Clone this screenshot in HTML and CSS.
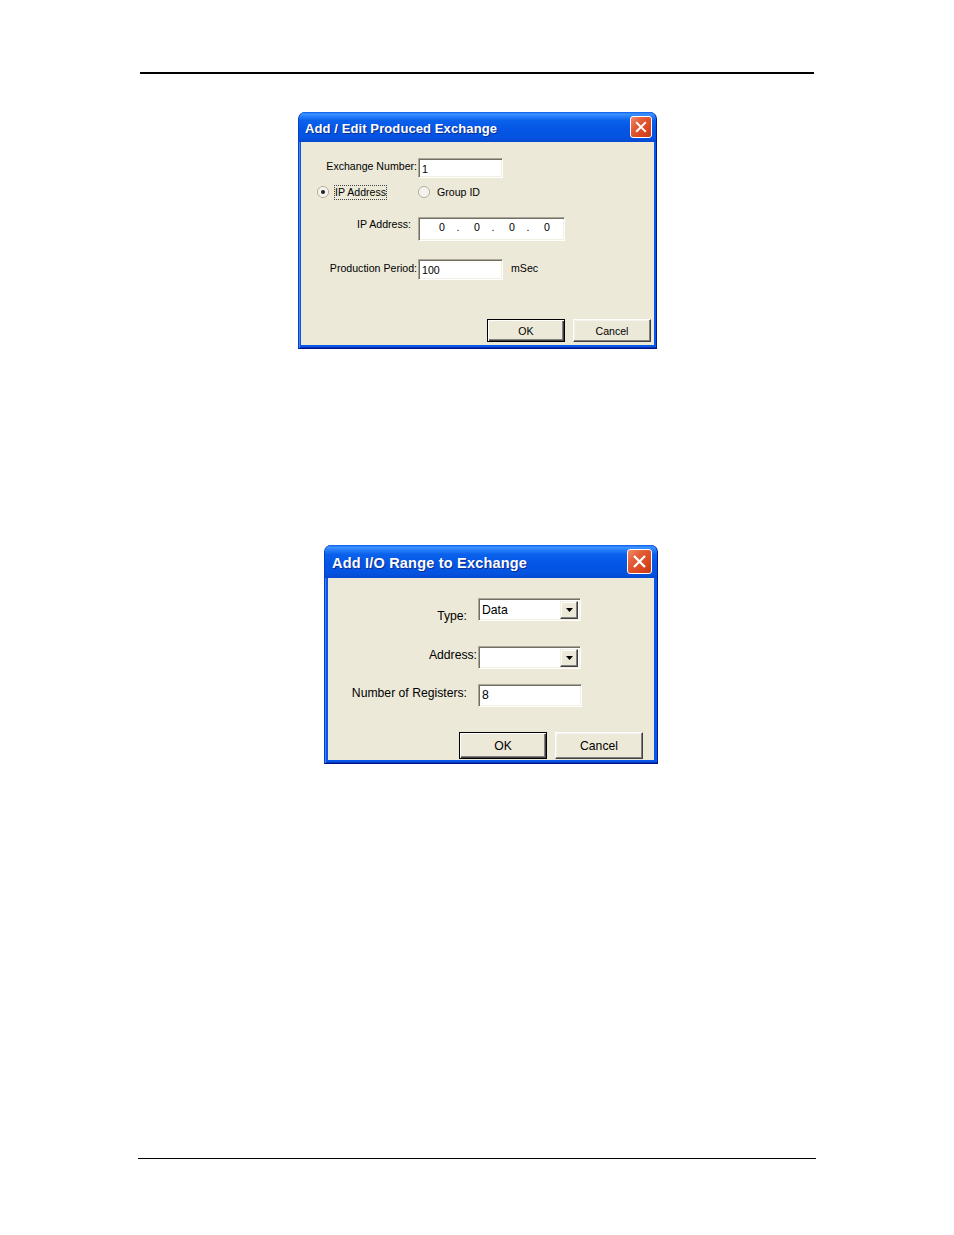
FILE: index.html
```html
<!DOCTYPE html>
<html>
<head>
<meta charset="utf-8">
<link rel="stylesheet" href="styles.css">
</head>
<body>
<div class="rule-top"></div>

<div class="win win1">
  <div class="title">
    <span class="title-text">Add / Edit Produced Exchange</span>
    <span class="close"><svg viewBox="0 0 22 22" width="100%" height="100%"><path d="M6.5 6.5 L15.5 15.5 M15.5 6.5 L6.5 15.5" stroke="#fff" stroke-width="2.2" stroke-linecap="square"/></svg></span>
  </div>
  <div class="body body1">
    <div class="row r1">
      <span class="lab lab1 up">Exchange Number:</span>
      <span class="field f1">1</span>
    </div>
    <div class="row radios">
      <span class="radio rad-a"><svg width="12" height="12" viewBox="0 0 12 12"><circle cx="6" cy="6" r="5.5" fill="#fff" stroke="#aca899"/><circle cx="6" cy="6" r="4.5" fill="#f4f3ee"/><circle cx="6" cy="6" r="2" fill="#222"/></svg><span class="focus">IP Address</span></span>
      <span class="radio rad-b"><svg width="12" height="12" viewBox="0 0 12 12"><circle cx="6" cy="6" r="5.5" fill="#fff" stroke="#aca899"/><circle cx="6" cy="6" r="4.5" fill="#f4f3ee"/></svg><span class="rtxt">Group ID</span></span>
    </div>
    <div class="row r3">
      <span class="lab lab3">IP Address:</span>
      <span class="field ip"><span class="oct">0</span><span class="dot">.</span><span class="oct">0</span><span class="dot">.</span><span class="oct">0</span><span class="dot">.</span><span class="oct">0</span></span>
    </div>
    <div class="row r4">
      <span class="lab lab1 up">Production Period:</span>
      <span class="field f1 f4">100</span>
      <span class="unit up">mSec</span>
    </div>
    <div class="btns btns1">
      <span class="btn def b1">OK</span>
      <span class="btn b1">Cancel</span>
    </div>
  </div>
</div>

<div class="win win2">
  <div class="title title2">
    <span class="title-text t2">Add I/O Range to Exchange</span>
    <span class="close close2"><svg viewBox="0 0 22 22" width="100%" height="100%"><path d="M6.5 6.5 L15.5 15.5 M15.5 6.5 L6.5 15.5" stroke="#fff" stroke-width="2.2" stroke-linecap="square"/></svg></span>
  </div>
  <div class="body body2">
    <div class="row2 q1">
      <span class="lab2 pad11 low">Type:</span>
      <span class="combo"><span class="ctext">Data</span><span class="cbtn"><svg width="7" height="4" viewBox="0 0 7 4"><path d="M0 0 H7 L3.5 4 Z" fill="#000"/></svg></span></span>
    </div>
    <div class="row2 q2">
      <span class="lab2 pad1 high">Address:</span>
      <span class="combo"><span class="ctext"></span><span class="cbtn"><svg width="7" height="4" viewBox="0 0 7 4"><path d="M0 0 H7 L3.5 4 Z" fill="#000"/></svg></span></span>
    </div>
    <div class="row2 q3">
      <span class="lab2 pad11 high">Number of Registers:</span>
      <span class="field f2">8</span>
    </div>
    <div class="btns btns2">
      <span class="btn def b2">OK</span>
      <span class="btn b2">Cancel</span>
    </div>
  </div>
</div>

<div class="rule-bottom"></div>
</body>
</html>
```

FILE: styles.css
```css
html, body {
  margin: 0;
  padding: 0;
  background: #fff;
}
body {
  width: 954px;
  height: 1235px;
  font-family: "Liberation Sans", Arial, sans-serif;
  color: #000;
}
.rule-top {
  margin: 72px 0 0 140px;
  width: 674px;
  height: 2px;
  background: #000;
}
.rule-bottom {
  margin: 394px 0 0 138px;
  width: 678px;
  height: 1px;
  background: #000;
}

/* window frame */
.win {
  box-sizing: border-box;
  background: #0a56e6;
  border-radius: 7px 7px 0 0;
  border-left: 1px solid #0a3fc4;
  border-right: 1px solid #00189a;
  border-bottom: 1px solid #00128a;
  box-shadow: inset 1px 0 #3b86ff, inset 0 -1px #0434b8;
}
.win1 {
  margin: 38px 0 0 298px;
  width: 359px;
  padding: 0 2px 3px;
}
.win2 {
  margin: 196px 0 0 324px;
  width: 334px;
  padding: 0 3px 3px;
}
.title {
  display: flex;
  justify-content: space-between;
  align-items: center;
  height: 30px;
  margin: 0 -2px;
  padding: 0 4px 0 6px;
  border-radius: 7px 7px 0 0;
  background: linear-gradient(to bottom, #0a5fe8 0%, #3f93ff 7%, #2a80fb 14%, #0a62ec 28%, #0556e6 55%, #0553e0 85%, #0549d0 100%);
}
.title2 {
  height: 33px;
  margin: 0 -3px;
  padding: 0 5px 0 7px;
}
.title-text {
  color: #fff;
  font-weight: bold;
  font-size: 13px;
  letter-spacing: 0.1px;
  text-shadow: 1px 1px #0b2c8c;
  padding-top: 2px;
}
.t2 {
  font-size: 14.5px;
  letter-spacing: 0.2px;
  padding-top: 3px;
}
.close {
  display: block;
  width: 22px;
  height: 22px;
  box-sizing: border-box;
  border: 1px solid #fff;
  border-radius: 3px;
  background: linear-gradient(135deg, #f08a6c 0%, #e35c38 35%, #d8441c 75%, #c2381a 100%);
}
.close2 {
  width: 25px;
  height: 25px;
}

/* client area */
.body {
  background: #ece9d8;
  box-sizing: border-box;
}
.body1 {
  height: 203px;
  padding-top: 16px;
  font-size: 10.6px;
}
.body2 {
  height: 182px;
  padding-top: 20px;
  font-size: 12.2px;
}

.row {
  display: flex;
  align-items: center;
}
.lab {
  box-sizing: border-box;
  width: 117px;
  text-align: right;
  padding-right: 1px;
  white-space: nowrap;
}
.up {
  position: relative;
  top: -2px;
}
.lab3 {
  padding-right: 7px;
  align-self: flex-start;
  padding-top: 1px;
}
.field {
  box-sizing: border-box;
  display: flex;
  align-items: center;
  background: #fff;
  border: 1px solid;
  border-color: #aca899 #fff #fff #aca899;
  box-shadow: inset 1px 1px #716f64, inset -1px -1px #f1efe2;
  padding: 1px 0 0 3px;
}
.f1 {
  width: 85px;
  height: 20px;
}
.f4 {
  height: 21px;
}
.r1 {
  height: 20px;
}
.radios {
  margin-top: 6px;
  height: 16px;
}
.radio {
  display: flex;
  align-items: center;
}
.rad-a {
  margin-left: 16px;
  width: 101px;
}
.rad-b {
  margin-left: 0;
}
.focus {
  margin-left: 5px;
  padding: 0 1px 1px 1px;
  outline: 1px dotted #444;
  outline-offset: -1px;
  line-height: 14px;
}
.rtxt {
  margin-left: 7px;
}
.r3 {
  margin-top: 17px;
}
.ip {
  width: 147px;
  height: 24px;
  padding: 0 0 4px 13px;
}
.oct {
  width: 20px;
  text-align: center;
}
.dot {
  width: 15px;
  text-align: center;
  padding-right: 3px;
  box-sizing: border-box;
}
.r4 {
  margin-top: 18px;
}
.unit {
  margin-left: 8px;
}

.btns {
  display: flex;
  justify-content: flex-end;
}
.btns1 {
  margin-top: 39px;
  gap: 8px;
  padding-right: 3px;
}
.btns2 {
  margin-top: 25px;
  gap: 8px;
  padding-right: 11px;
}
.btn {
  box-sizing: border-box;
  display: flex;
  align-items: center;
  justify-content: center;
  background: #ece9d8;
  border: 1px solid;
  border-color: #fff #404040 #404040 #fff;
  box-shadow: inset -1px -1px #808080, inset 1px 1px #f4f3ee;
}
.btn.def {
  border: 1px solid #000;
  box-shadow: inset 1px 1px #fff, inset -1px -1px #404040, inset -2px -2px #808080;
}
.b1 {
  width: 78px;
  height: 23px;
}
.b2 {
  width: 88px;
  height: 27px;
}

/* dialog 2 */
.row2 {
  display: flex;
  align-items: center;
}
.lab2 {
  box-sizing: border-box;
  width: 150px;
  text-align: right;
  white-space: nowrap;
}
.pad11 {
  padding-right: 11px;
}
.pad1 {
  padding-right: 1px;
}
.low {
  position: relative;
  top: 6px;
}
.high {
  position: relative;
  top: -3px;
}
.q2 {
  margin-top: 25px;
}
.q3 {
  margin-top: 15px;
}
.combo {
  box-sizing: border-box;
  display: flex;
  align-items: center;
  justify-content: space-between;
  width: 103px;
  height: 23px;
  background: #fff;
  border: 1px solid;
  border-color: #aca899 #fff #fff #aca899;
  box-shadow: inset 1px 1px #716f64, inset -1px -1px #f1efe2;
  padding: 2px 2px 2px 3px;
}
.ctext {
  padding-top: 1px;
}
.cbtn {
  box-sizing: border-box;
  width: 18px;
  height: 18px;
  display: flex;
  align-items: center;
  justify-content: center;
  background: #ece9d8;
  border: 1px solid;
  border-color: #f1efe2 #404040 #404040 #f1efe2;
  box-shadow: inset -1px -1px #808080, inset 1px 1px #fff;
}
.f2 {
  width: 104px;
  height: 23px;
  padding-top: 0;
  padding-bottom: 1px;
}
```
